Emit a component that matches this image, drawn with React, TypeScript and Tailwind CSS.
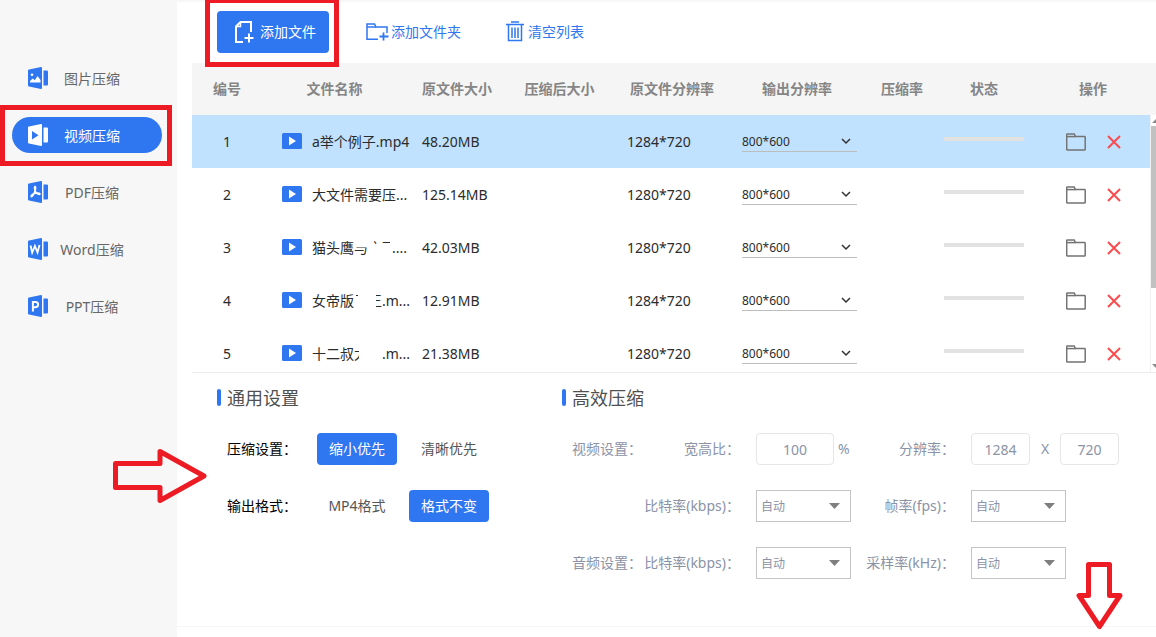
import React from "react";

type DocKind = "image" | "video" | "pdf" | "word" | "ppt";

const navItems: { kind: DocKind; label: string }[] = [
  { kind: "image", label: "图片压缩" },
  { kind: "video", label: "视频压缩" },
  { kind: "pdf", label: "PDF压缩" },
  { kind: "word", label: "Word压缩" },
  { kind: "ppt", label: "PPT压缩" },
];

type Part = { text: string; clip?: string };

const files: { name: Part[]; size: string; resolution: string }[] = [
  { name: [{ text: "a举个例子.mp4" }], size: "48.20MB", resolution: "1284*720" },
  { name: [{ text: "大文件需要压..." }], size: "125.14MB", resolution: "1280*720" },
  {
    name: [
      { text: "猫头鹰" },
      { text: "与", clip: "[clip-path:inset(50%_0_0_0)]" },
      { text: "之可", clip: "-mr-1 [clip-path:inset(0_6px_68%_4px)]" },
      { text: "...." },
    ],
    size: "42.03MB",
    resolution: "1280*720",
  },
  {
    name: [
      { text: "女帝版" },
      { text: "飞", clip: "[clip-path:inset(0_10px_65%_2px)]" },
      { text: "王", clip: "[clip-path:inset(0_0_0_8px)]" },
      { text: ".m..." },
    ],
    size: "12.91MB",
    resolution: "1284*720",
  },
  {
    name: [
      { text: "十二叔" },
      { text: "太", clip: "[clip-path:inset(0_9px_0_0)]" },
      { text: "太", clip: "[clip-path:inset(0_14px_0_0)]" },
      { text: ".m..." },
    ],
    size: "21.38MB",
    resolution: "1280*720",
  },
];

const columns = [
  { title: "编号", width: "w-[70px]" },
  { title: "文件名称", width: "w-[145px]" },
  { title: "原文件大小", width: "w-[100px]" },
  { title: "压缩后大小", width: "w-[105px]" },
  { title: "原文件分辨率", width: "w-[120px]" },
  { title: "输出分辨率", width: "w-[130px]" },
  { title: "压缩率", width: "w-[80px]" },
  { title: "状态", width: "w-[84px]" },
  { title: "操作", width: "pl-1" },
];

function DocIcon({ kind, active }: { kind: DocKind; active: boolean }) {
  const body = active ? "#ffffff" : "#2f77f1";
  const mark = active ? "#2f77f1" : "#ffffff";
  return (
    <svg viewBox="0 0 20 22" className="h-[22px] w-5 shrink-0" aria-hidden="true">
      <path d="M1 2.6 13 .1Q14 0 14 1v20q0 1-1 .9L1 19.4q-1-.2-1-1V3.600q0-.8 1-1Z" fill={body} />
      <path d="M15.500 3.500H19q1 0 1 1v13q0 1-1 1h-3.500Z" fill={body} />
      {kind === "image" && (
        <>
          <circle cx="4" cy="7.800" r="1.300" fill={mark} />
          <path d="M2 15.500V14l2.800-2.500 2 1.700L9.500 9l3 4v2.500Z" fill={mark} />
        </>
      )}
      {kind === "video" && <path d="M4 7v8.500l6.500-4.250Z" fill={mark} />}
      {kind === "pdf" && (
        <path
          d="M6.800 5.500c1.200 0 .9 2.500.2 4.500-.8 2.200-2 5.500-3.600 5.700-1.200-1.600 2.500-3.200 4.200-3.500 1.800-.3 4-.3 4.300.6.200 1.100-2.300.4-3.500-.9C7 10.500 6 7 6.800 5.500Z"
          fill="none"
          stroke={mark}
          strokeWidth="1.600"
          strokeLinejoin="round"
        />
      )}
      {kind === "word" && (
        <path d="m2.500 7.500 1.700 7L6.900 8l2.600 6.500 2-7.500" fill="none" stroke={mark} strokeWidth="1.800" />
      )}
      {kind === "ppt" && (
        <path d="M4.900 16.500V7h2.600q2.600 0 2.600 2.500T7.500 12.200H5" fill="none" stroke={mark} strokeWidth="2" />
      )}
    </svg>
  );
}

function AddFileIcon() {
  return (
    <svg viewBox="0 0 20 24" className="h-6 w-5" fill="none" stroke="currentColor" strokeWidth="2" aria-hidden="true">
      <path d="M9 22H2V6.500L6.500 2H17v10" />
      <path d="M6.500 2v4.500H2" strokeWidth="1.500" />
      <path d="M15 13.500v9M10.500 18h9" />
    </svg>
  );
}

function AddFolderIcon() {
  return (
    <svg viewBox="0 0 23 20" className="h-5 w-[23px]" fill="none" stroke="currentColor" strokeWidth="1.500" aria-hidden="true">
      <path d="M12 17.200H1V2h7.500l1.500 3h11v6" />
      <path d="M1 5h9" />
      <path d="M17.500 10.500v8M13.500 14.500h9" strokeWidth="1.800" />
    </svg>
  );
}

function TrashIcon() {
  return (
    <svg viewBox="0 0 18 21" className="h-[21px] w-[18px]" fill="none" stroke="currentColor" strokeWidth="1.500" aria-hidden="true">
      <path d="M0 3.500h18M5 1h8M2.500 3.500v16h13v-16M6 6.500v10.500M9 6.500v10.500M12 6.500v10.500" />
    </svg>
  );
}

function FolderIcon() {
  return (
    <svg viewBox="0 0 20 18" className="h-[18px] w-5" fill="none" stroke="#737373" strokeWidth="1.500" aria-hidden="true">
      <path d="M1.500 .9h6.700l1.200 2.700h9.100q.7 0 .7.700v12q0 .8-.7.800h-17q-.8 0-.8-.8V1.600q0-.7.8-.7Z" />
      <path d="M1 3.600h8.500" />
    </svg>
  );
}

function AutoSelect({ id }: { id: string }) {
  return (
    <div className="relative w-[95px]">
      <select
        id={id}
        className="h-8 w-full appearance-none border border-[#c4c4c4] bg-white pt-0.5 pl-1 text-xs text-[#8b93a7]"
      >
        <option>自动</option>
      </select>
      <svg viewBox="0 0 11 6" className="pointer-events-none absolute top-[13px] right-[11px] h-[6px] w-[11px]" aria-hidden="true">
        <path d="M0 0h11L5.500 6Z" fill="#7f7f7f" />
      </svg>
    </div>
  );
}

function SectionTitle({ children }: { children: React.ReactNode }) {
  return (
    <h2 className="flex h-[27px] items-center gap-1.5 text-lg text-[#505050]">
      <span className="h-[17px] w-1 rounded-xs bg-[#2f77f1]" />
      {children}
    </h2>
  );
}

function Choice({ children, selected = false }: { children: React.ReactNode; selected?: boolean }) {
  return (
    <button
      type="button"
      aria-pressed={selected}
      className={
        selected
          ? "h-8 w-20 rounded bg-[#2f77f1] text-white"
          : "h-8 w-20 rounded text-[#555555]"
      }
    >
      {children}
    </button>
  );
}

const numberBox = "h-8 rounded border border-[#e6e6e6] bg-white text-center text-[#8b93a7]";

export default function App() {
  return (
    <div className="relative flex min-h-screen overflow-hidden bg-white font-['Noto_Sans','Noto_Sans_CJK_SC',sans-serif] text-sm text-[#2b2b2b]">
      <aside className="w-[177px] shrink-0 bg-[#f7f7f7] px-3 pt-[60px]">
        <nav className="flex flex-col gap-[21px]">
          {navItems.map(({ kind, label }) => {
            const active = kind === "video";
            return (
              <a
                key={kind}
                href={"#" + kind}
                aria-current={active ? "page" : undefined}
                className={
                  active
                    ? "flex h-9 w-[150px] items-center gap-2 rounded-full bg-[#2f77f1] pl-4 text-white"
                    : "flex h-9 w-[150px] items-center gap-2 rounded-full pl-4 text-[#666666]"
                }
              >
                <DocIcon kind={kind} active={active} />
                <span className="w-[72px] pt-0.5 text-center whitespace-nowrap">{label}</span>
              </a>
            );
          })}
        </nav>
      </aside>

      <main className="flex min-w-0 flex-1 flex-col">
        <div className="flex h-[63px] items-center gap-[29px] border-t-2 border-b-2 border-t-[#f7f7f7] border-b-white pl-10 text-[#2f77f1]">
          <button type="button" className="flex h-[42px] w-28 items-center justify-center gap-1.5 rounded bg-[#2f77f1] pl-1 text-white">
            <AddFileIcon />
            添加文件
          </button>
          <button type="button" className="flex h-[42px] items-center gap-0.5 px-2">
            <AddFolderIcon />
            添加文件夹
          </button>
          <button type="button" className="flex h-[42px] items-center gap-1 px-2">
            <TrashIcon />
            清空列表
          </button>
        </div>

        <section className="relative ml-[15px] max-h-[310px] overflow-hidden border-b border-[#ebebeb]">
          <table className="w-full table-fixed border-collapse">
            <thead className="bg-[#f5f5f5] text-[#858585]">
              <tr className="h-[52px]">
                {columns.map((column) => (
                  <th key={column.title} className={column.width + " text-center font-bold whitespace-nowrap"}>
                    {column.title}
                  </th>
                ))}
              </tr>
            </thead>
            <tbody>
              {files.map((file, index) => (
                <tr key={index} className={index === 0 ? "h-[53px] bg-[#c0e2ff]" : "h-[53px]"}>
                  <td className="text-center">{index + 1}</td>
                  <td className="pl-5">
                    <div className="flex items-center gap-2.5 whitespace-nowrap">
                      <svg viewBox="0 0 20 18" className="h-[18px] w-5 shrink-0" aria-hidden="true">
                        <rect width="20" height="16" rx="1.500" fill="#2f77f1" />
                        <path d="M7 3.500v9l7-4.500Z" fill="#fff" />
                      </svg>
                      <span className="flex">
                        {file.name.map((part, i) => (
                          <span key={i} className={part.clip}>
                            {part.text}
                          </span>
                        ))}
                      </span>
                    </div>
                  </td>
                  <td className="pl-[15px]">{file.size}</td>
                  <td />
                  <td className="pl-[15px]">{file.resolution}</td>
                  <td className="pb-0.5 pl-2.5">
                    <div className="relative w-[115px]">
                      <select
                        aria-label={"输出分辨率 " + (index + 1)}
                        className="block h-[22px] w-full appearance-none border-b border-[#bdbdbd] bg-transparent pt-1 text-xs"
                      >
                        <option>800*600</option>
                      </select>
                      <svg viewBox="0 0 10 7" className="pointer-events-none absolute top-2 right-1.5 h-[7px] w-2.5" fill="none" stroke="#333" strokeWidth="1.500" aria-hidden="true">
                        <path d="m1 1 4 4 4-4" />
                      </svg>
                    </div>
                  </td>
                  <td />
                  <td className="px-0.5 pb-1.5">
                    <div role="progressbar" aria-label="进度" aria-valuenow={0} className="h-1 bg-[#e2e2e2]" />
                  </td>
                  <td className="pl-1">
                    <div className="flex items-center justify-center gap-[21px]">
                      <button type="button" aria-label="打开文件夹">
                        <FolderIcon />
                      </button>
                      <button type="button" aria-label="删除">
                        <svg viewBox="0 0 14 14" className="size-3.5" stroke="#fb4b50" strokeWidth="2" aria-hidden="true">
                          <path d="m1 1 12 12M13 1 1 13" />
                        </svg>
                      </button>
                    </div>
                  </td>
                </tr>
              ))}
            </tbody>
          </table>
          <div className="absolute top-[52px] right-0 bottom-0 flex w-1.5 flex-col items-end border-l border-[#f0f0f0] bg-white pt-1 pb-1" aria-hidden="true">
            <svg viewBox="0 0 4 4" className="size-1">
              <path d="M0 4 4 0v4Z" fill="#8a8a8a" />
            </svg>
            <div className="mt-[3px] h-[162px] w-full bg-[#c1c1c1]" />
            <svg viewBox="0 0 4 4" className="mt-auto size-1">
              <path d="M0 0h4v4Z" fill="#8a8a8a" />
            </svg>
          </div>
        </section>

        <div className="flex border-b border-[#f5f5f5] pt-[11px] pb-[47px] pl-10">
          <section className="w-[345px] shrink-0">
            <SectionTitle>通用设置</SectionTitle>
            <div className="mt-[22px] flex flex-col gap-[25px] pl-2.5">
              <div role="group" aria-label="压缩设置" className="flex items-center">
                <span className="w-[90px] text-black">压缩设置：</span>
                <div className="flex gap-3">
                  <Choice selected>缩小优先</Choice>
                  <Choice>清晰优先</Choice>
                </div>
              </div>
              <div role="group" aria-label="输出格式" className="flex items-center">
                <span className="w-[90px] text-black">输出格式：</span>
                <div className="flex gap-3">
                  <Choice>MP4格式</Choice>
                  <Choice selected>格式不变</Choice>
                </div>
              </div>
            </div>
          </section>

          <section className="min-w-0 flex-1">
            <SectionTitle>高效压缩</SectionTitle>
            <div className="mt-[22px] grid grid-cols-[70px_114px_101px_114px_auto] items-center gap-y-[25px] pl-2.5 whitespace-nowrap text-[#8b93a7]">
              <span>视频设置：</span>
              <label htmlFor="ratio" className="pr-4 text-right">宽高比：</label>
              <div className="flex items-center gap-1">
                <input id="ratio" defaultValue="100" className={numberBox + " w-[78px]"} />
                <span>%</span>
              </div>
              <label htmlFor="res-width" className="pr-4 text-right">分辨率：</label>
              <div className="flex items-center">
                <input id="res-width" defaultValue="1284" className={numberBox + " w-[59px]"} />
                <span className="w-[30px] text-center">X</span>
                <input aria-label="分辨率高度" defaultValue="720" className={numberBox + " w-[59px]"} />
              </div>

              <label htmlFor="video-bitrate" className="col-start-2 pr-4 text-right">比特率(kbps)：</label>
              <AutoSelect id="video-bitrate" />
              <label htmlFor="fps" className="pr-4 text-right">帧率(fps)：</label>
              <AutoSelect id="fps" />

              <span>音频设置：</span>
              <label htmlFor="audio-bitrate" className="pr-4 text-right">比特率(kbps)：</label>
              <AutoSelect id="audio-bitrate" />
              <label htmlFor="sample-rate" className="pr-4 text-right">采样率(kHz)：</label>
              <AutoSelect id="sample-rate" />
            </div>
          </section>
        </div>
      </main>

      <div className="pointer-events-none absolute top-[105px] left-0 h-[61px] w-[172px] border-[5px] border-[#ed1c24]" />
      <div className="pointer-events-none absolute -top-0.5 left-[205px] h-[69px] w-[134px] border-[5px] border-[#ed1c24]" />
      <svg viewBox="0 0 96 56" className="pointer-events-none absolute top-[448px] left-[112px] h-14 w-24" aria-hidden="true">
        <path d="M3.500 15.500H48V3.500L92 28 48 52.500V39.500H3.500Z" fill="none" stroke="#ed1c24" strokeWidth="5" strokeLinejoin="round" />
      </svg>
      <svg viewBox="0 0 48 70" className="pointer-events-none absolute top-[561px] left-[1076px] h-[70px] w-12" aria-hidden="true">
        <path d="M12.500 3.500h21V34.500H44L23.500 65.500 3 34.500h9.500Z" fill="none" stroke="#ed1c24" strokeWidth="5" strokeLinejoin="round" />
      </svg>
    </div>
  );
}
